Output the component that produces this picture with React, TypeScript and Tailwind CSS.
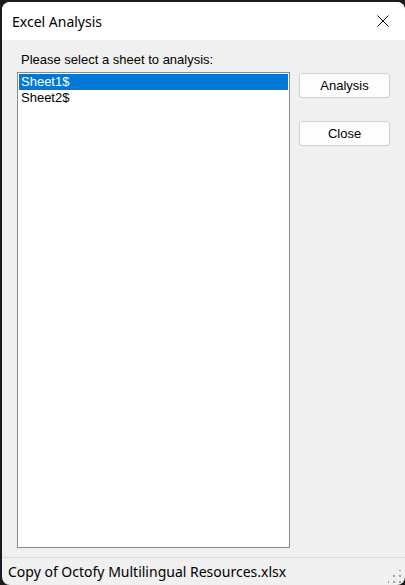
import React from "react";

const sheets = ["Sheet1$", "Sheet2$"];

const SizeGrip = () => (
  <svg width="14" height="14" viewBox="0 0 14 14" className="absolute right-[3px] bottom-[1px]">
    {[
      [11, 1],
      [5, 7],
      [11, 7],
      [-1, 13],
      [5, 13],
      [11, 13],
    ].map(([x, y], i) => (
      <rect key={i} x={x} y={y - 2} width="2" height="2" fill="#a0a0a0" />
    ))}
  </svg>
);

export default function App() {
  return (
    <div className="w-[405px] h-[585px] bg-[#1b1a1d] pl-[2px] pt-[2px] flex overflow-hidden">
      <div className="flex-1 flex flex-col bg-[#f0f0f0] rounded-[8px] overflow-hidden">
        {/* title bar */}
        <div className="h-[38px] bg-white flex items-center justify-between pl-[10px] pr-[16px] shrink-0">
          <span className="text-[14px] text-black" style={{ fontFamily: '"Noto Sans", "Open Sans", sans-serif' }}>
            Excel Analysis
          </span>
          <svg width="12" height="12" viewBox="0 0 12 12">
            <path d="M0.5 0.5 L11.5 11.5 M11.5 0.5 L0.5 11.5" stroke="#000" strokeWidth="1" />
          </svg>
        </div>

        {/* body */}
        <div className="flex-1 flex px-[15px] pt-[12px] gap-[9px]" style={{ fontFamily: '"Liberation Sans", Arial, sans-serif' }}>
          <div className="flex flex-col w-[274px]">
            <div className="ml-[4px] h-[20px] text-[13px] leading-[16px] text-black">Please select a sheet to analysis:</div>
            <div className="h-[476px] bg-white border border-[#868a91] p-[1px]">
              {sheets.map((s, i) => (
                <div
                  key={s}
                  className={
                    i === 0
                      ? "h-[16px] leading-[16px] px-[2px] text-[13px] bg-[#0078d7] text-white"
                      : "h-[16px] leading-[16px] px-[2px] text-[13px] text-black"
                  }
                >
                  {s}
                </div>
              ))}
            </div>
          </div>
          <div className="flex flex-col gap-[23px] pt-[21px]">
            <button className="w-[91px] h-[25px] rounded-[3px] border border-[#d0d0d0] bg-[#fdfdfd] text-[13px] text-black">
              Analysis
            </button>
            <button className="w-[91px] h-[25px] rounded-[3px] border border-[#d0d0d0] bg-[#fdfdfd] text-[13px] text-black">
              Close
            </button>
          </div>
        </div>

        {/* status bar */}
        <div className="relative h-[28px] shrink-0 border-t border-[#dadada] flex items-center pl-[6px]">
          <span className="text-[14px] text-black" style={{ fontFamily: '"Noto Sans", "Open Sans", sans-serif' }}>
            Copy of Octofy Multilingual Resources.xlsx
          </span>
          <SizeGrip />
        </div>
      </div>
    </div>
  );
}
